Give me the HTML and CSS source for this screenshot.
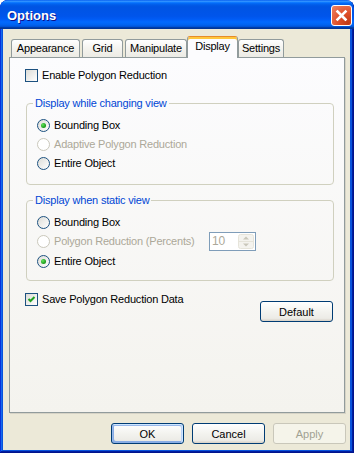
FILE: index.html
```html
<!DOCTYPE html>
<html>
	<head>
		<meta charset="utf-8">
		<title>Options</title>
		<link rel="stylesheet" href="styles.css">
	</head>
	<body>
		<div class="window">
			<div class="titlebar">
				<span class="title">Options</span>
				<button type="button" class="close">
					<svg width="19" height="19" viewBox="0 0 19 19">
						<path d="M5.5 5.5 L13.5 13.5 M13.5 5.5 L5.5 13.5" stroke="#fff" stroke-width="2.6" stroke-linecap="square" fill="none"/>
					</svg>
				</button>
			</div>
			<div class="client">
				<div class="tabs">
					<div class="tab tab-appearance">Appearance</div>
					<div class="tab tab-grid">Grid</div>
					<div class="tab tab-manipulate">Manipulate</div>
					<div class="tab tab-display active">Display</div>
					<div class="tab tab-settings">Settings</div>
				</div>
				<div class="panel">
					<div class="check">
						<span class="box"></span>
						<span>Enable Polygon Reduction</span>
					</div>

					<fieldset class="group group-changing">
						<legend>Display while changing view</legend>
						<div class="opt"><span class="radio on"></span>Bounding Box</div>
						<div class="opt off"><span class="radio"></span>Adaptive Polygon Reduction</div>
						<div class="opt"><span class="radio"></span>Entire Object</div>
					</fieldset>

					<fieldset class="group group-static">
						<legend>Display when static view</legend>
						<div class="opt"><span class="radio"></span>Bounding Box</div>
						<div class="opt off opt-spin">
							<span class="radio"></span>
							<span class="opt-label">Polygon Reduction (Percents)</span>
							<div class="spin">
								<span class="spin-val">10</span>
								<svg class="spin-btn" width="16" height="15" viewBox="0 0 16 15">
									<rect x="0.5" y="0.5" width="15" height="14" rx="2" fill="#F4F3EE" stroke="#E6E4DA"/>
									<line x1="1" y1="7.5" x2="15" y2="7.5" stroke="#E6E4DA"/>
									<path d="M5 5.5 L8 2.5 L11 5.5 Z" fill="#C9C7BA"/>
									<path d="M5 9.5 L8 12.5 L11 9.5 Z" fill="#C9C7BA"/>
								</svg>
							</div>
						</div>
						<div class="opt"><span class="radio on"></span>Entire Object</div>
					</fieldset>

					<div class="save-row">
						<div class="check">
							<span class="box checked">
								<svg width="11" height="11" viewBox="0 0 11 11">
									<path d="M2.5 5 L4.5 7 L8.5 3" stroke="#21A121" stroke-width="2" fill="none"/>
								</svg>
							</span>
							<span>Save Polygon Reduction Data</span>
						</div>
						<button type="button" class="btn btn-default">Default</button>
					</div>
				</div>
				<div class="actions">
					<button type="button" class="btn focus">OK</button>
					<button type="button" class="btn">Cancel</button>
					<button type="button" class="btn" disabled>Apply</button>
				</div>
			</div>
		</div>
	</body>
</html>
```

FILE: styles.css
```css
body {
	margin: 0;
	background-color: #fff;
	font-family: "Liberation Sans", Arial, sans-serif;
	font-size: 11px;
	letter-spacing: -0.2px;
	color: #000;
}

.window {
	width: 354px;
	height: 453px;
	display: flex;
	flex-direction: column;
	background-color: #0853DC;
	border-radius: 8px 8px 0 0;
	box-shadow: inset -1px -1px #00138C, inset 1px 0 #0831D9, inset -2px -2px #001EA0, inset 2px 0 #166AEE;
	overflow: hidden;
}

/* title bar */
.titlebar {
	height: 29px;
	flex: none;
	display: flex;
	align-items: center;
	justify-content: space-between;
	padding: 0 2px 0 7px;
	background: linear-gradient(180deg, #0058EE 0%, #3593FF 4%, #288EFF 6%, #127DFF 8%, #036FFC 10%, #0262EE 14%, #0057E5 20%, #0054E3 24%, #0055EB 56%, #005BF5 66%, #026AFE 76%, #0062EF 86%, #0052D6 92%, #0040AB 94%, #003092 100%);
	border-radius: 8px 8px 0 0;
}

.title {
	color: #fff;
	font-weight: bold;
	font-size: 13px;
	letter-spacing: 0;
	text-shadow: 1px 1px #0F1089;
	padding-top: 1px;
}

.close {
	width: 21px;
	height: 21px;
	padding: 0;
	display: flex;
	align-items: center;
	justify-content: center;
	border: 1px solid #fff;
	border-radius: 3px;
	background: radial-gradient(circle at 85% 90%, #C13A16 0%, #E0502A 45%, #EE8565 100%);
	margin-top: 1px;
}

/* client area */
.client {
	flex: 1;
	margin: 0 4px 3px 3px;
	padding: 7px 4px 0 6px;
	background-color: #ECE9D8;
	display: flex;
	flex-direction: column;
}

.tabs {
	height: 21px;
	display: flex;
	align-items: flex-end;
	padding-left: 2px;
}

.tab {
	box-sizing: border-box;
	height: 18px;
	border: 1px solid #919B9C;
	border-bottom: 0;
	border-radius: 3px 3px 0 0;
	background: linear-gradient(180deg, #FFFFFF 0%, #F4F3EE 50%, #ECEBE5 100%);
	text-align: center;
	line-height: 17px;
}

.tab-appearance { width: 69px; margin-right: 2px; }
.tab-grid { width: 41px; margin-right: 2px; }
.tab-manipulate { width: 62px; }
.tab-display { width: 51px; }
.tab-settings { width: 46px; }

.tab.active {
	position: relative;
	z-index: 1;
	height: 22px;
	margin-bottom: -1px;
	padding-top: 1px;
	background: #FCFCFE;
	border-top-color: #E68B2C;
	box-shadow: inset 0 2px #FFC73C;
}

.panel {
	box-sizing: border-box;
	width: 336px;
	height: 356px;
	border: 1px solid #919B9C;
	background: linear-gradient(180deg, #FCFCFE 0%, #F4F3EE 100%);
	box-shadow: 1px 1px 0 #D6D3C6;
	padding: 11px 0 0 15px;
}

/* check boxes */
.check {
	display: flex;
	align-items: center;
	height: 13px;
	line-height: 13px;
}

.box {
	box-sizing: border-box;
	width: 13px;
	height: 13px;
	margin-right: 4px;
	border: 1px solid #1C5180;
	background: linear-gradient(135deg, #DCDCD7 0%, #FFFFFF 100%);
}

.box svg {
	display: block;
}

/* group boxes */
.group {
	box-sizing: border-box;
	width: 308px;
	margin: 15px 0 0 1px;
	padding: 9px 0 14px 6px;
	border: 1px solid #D0D0BF;
	border-radius: 4px;
}

.group legend {
	padding: 0 2px;
	line-height: 13px;
	color: #0046D5;
}

.group-static {
	margin-top: 9px;
	padding-bottom: 12px;
}

.opt {
	display: flex;
	align-items: center;
	height: 13px;
	line-height: 13px;
	margin-left: 4px;
}

.group-changing .opt + .opt {
	margin-top: 6px;
}

.opt.off {
	color: #ACA899;
}

.radio {
	box-sizing: border-box;
	width: 13px;
	height: 13px;
	margin-right: 4px;
	border: 1px solid #1C5180;
	border-radius: 50%;
	background: linear-gradient(135deg, #DCDCD7 0%, #FFFFFF 100%);
	display: flex;
	align-items: center;
	justify-content: center;
}

.radio.on::after {
	content: "";
	width: 5px;
	height: 5px;
	border-radius: 50%;
	background: radial-gradient(circle at 35% 35%, #62E45B 0%, #21A121 60%, #108B10 100%);
}

.opt.off .radio {
	border-color: #CAC8BB;
	background: #FFFFFF;
}

.opt-spin {
	height: 19px;
	margin-top: 3px;
	margin-bottom: 4px;
}

.opt-label {
	width: 155px;
}

.spin {
	box-sizing: border-box;
	width: 47px;
	height: 19px;
	display: flex;
	align-items: center;
	border: 1px solid #7F9DB9;
	background-color: #fff;
}

.spin-val {
	flex: 1;
	padding-left: 2px;
	font-size: 12px;
	color: #ACA899;
}

.spin-btn {
	display: block;
	margin-right: 1px;
}

/* buttons */
.save-row {
	width: 308px;
	margin-top: 12px;
	display: flex;
	justify-content: space-between;
	align-items: flex-start;
}

.btn {
	box-sizing: border-box;
	width: 73px;
	height: 21px;
	padding: 0;
	border: 1px solid #003C74;
	border-radius: 3px;
	background: linear-gradient(180deg, #FFFFFF 0%, #F3F3EF 50%, #ECEBE6 86%, #D6D0C5 100%);
	font-family: "Liberation Sans", Arial, sans-serif;
	font-size: 11px;
	color: #000;
}

.btn-default {
	margin-top: 8px;
}

.btn.focus {
	box-shadow: inset -1px 1px #CEE7FF, inset 1px 2px #98B8EA, inset -2px 2px #BCD4F6, inset 1px -1px #89ADE4, inset 2px -2px #89ADE4;
}

.btn:disabled {
	border-color: #C9C7BA;
	background: #F5F4EA;
	color: #A1A192;
}

.actions {
	display: flex;
	justify-content: flex-end;
	gap: 8px;
	margin-top: 10px;
}
```
